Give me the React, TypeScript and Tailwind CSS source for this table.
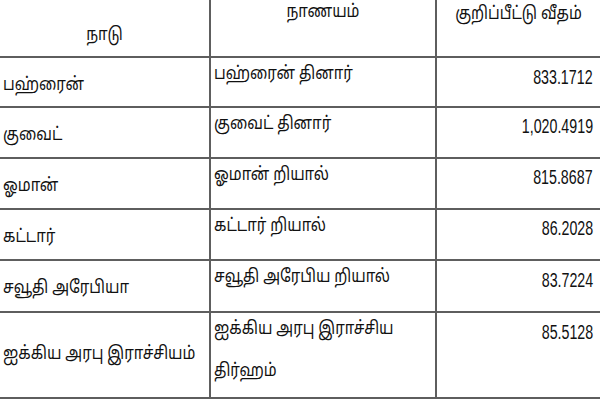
const rows = [
  { country: 'பஹ்ரைன்', currency: ['பஹ்ரைன் தினார்'], rate: '833.1712', h: 'h-[50px]', pt: 'pt-[17px]' },
  { country: 'குவைட்', currency: ['குவைட் தினார்'], rate: '1,020.4919', h: 'h-[51px]', pt: 'pt-[17px]' },
  { country: 'ஓமான்', currency: ['ஓமான் றியால்'], rate: '815.8687', h: 'h-[51px]', pt: 'pt-[17px]' },
  { country: 'கட்டார்', currency: ['கட்டார் றியால்'], rate: '86.2028', h: 'h-[51px]', pt: 'pt-[17px]' },
  { country: 'சவூதி அரேபியா', currency: ['சவூதி அரேபிய றியால்'], rate: '83.7224', h: 'h-[52px]', pt: 'pt-[17px]' },
  { country: 'ஐக்கிய அரபு இராச்சியம்', currency: ['ஐக்கிய அரபு இராச்சிய', 'திர்ஹம்'], rate: '85.5128', h: 'h-[86px]', pt: 'pt-[31px]' },
];

const tamil = "font-['Noto_Sans_Tamil','Lohit_Tamil','Latha',sans-serif] text-[15px] leading-[22px]";
const line = 'border-[#5e5e5e]';

// the scan's Tamil face is taller and narrower than ours, so stretch it a bit
function Ta({ children }: { children: React.ReactNode }) {
  return <span className="inline-block scale-y-[1.2] text-[#111]">{children}</span>;
}

export default function App() {
  return (
    <div className="w-[600px] h-[400px] bg-white overflow-hidden text-black">
      <div className="grid grid-cols-[211px_226px_163px]">
        {/* Header */}
        <div className={`h-[58px] border-r-2 border-b-2 ${line} text-center pt-[25px] ${tamil}`}>
          <Ta>நாடு</Ta>
        </div>
        <div className={`h-[58px] border-r-2 border-b-2 ${line} text-center pt-[2px] ${tamil}`}>
          <Ta>நாணயம்</Ta>
        </div>
        <div className={`h-[58px] border-b-2 ${line} text-center pt-[4px] ${tamil}`}>
          <Ta>குறிப்பீட்டு வீதம்</Ta>
        </div>

        {rows.map((r, i) => [
          <div key={`c${i}`} className={`${r.h} border-r-2 border-b-2 ${line} pl-[3px] ${r.pt} ${tamil}`}>
            <Ta>{r.country}</Ta>
          </div>,
          <div key={`n${i}`} className={`${r.h} border-r-2 border-b-2 ${line} pl-[3px] pt-[6px] flex flex-col items-start gap-[20px] ${tamil}`}>
            {r.currency.map((c) => (
              <Ta key={c}>{c}</Ta>
            ))}
          </div>,
          <div key={`r${i}`} className={`${r.h} border-b-2 ${line} pr-[7px] pt-[6px] text-right`}>
            <span className="inline-block scale-y-[1.3] scale-x-[0.95] origin-right text-[15px] leading-[22px] font-['Liberation_Sans',sans-serif] text-[#111]">
              {r.rate}
            </span>
          </div>,
        ])}
      </div>
    </div>
  );
}
